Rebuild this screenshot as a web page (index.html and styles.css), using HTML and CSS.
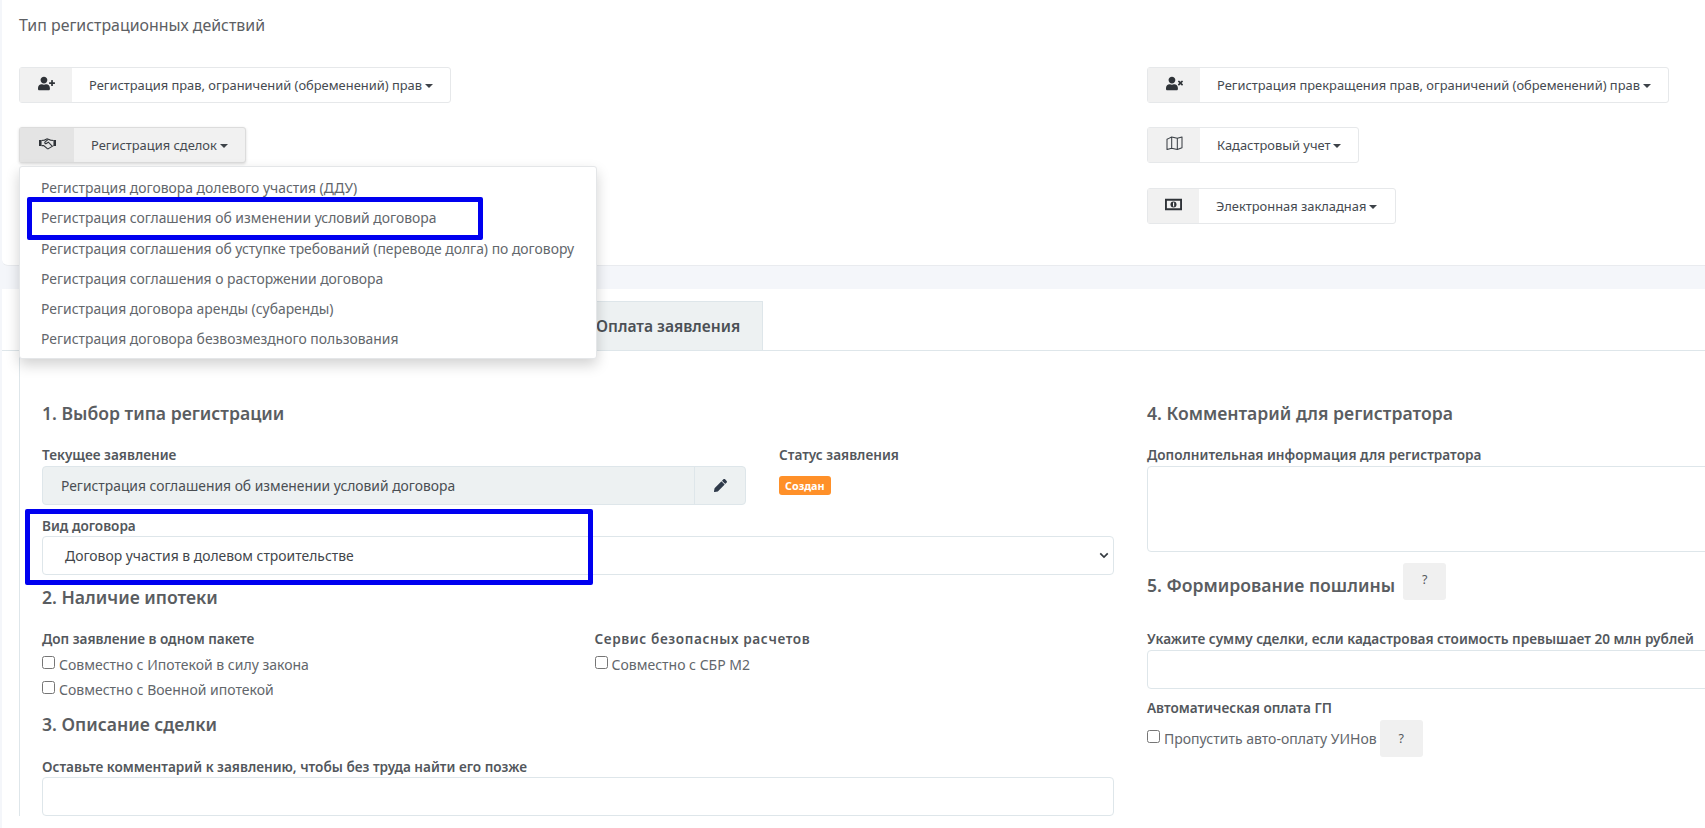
FILE: index.html
```html
<!DOCTYPE html>
<html lang="ru">
<head>
  <meta charset="UTF-8">
  <title>Тип регистрационных действий</title>
  <link rel="stylesheet" href="styles.css">
</head>
<body>
  <!-- Типы действий -->
  <section class="card actions-card">
    <h4 class="card-title">Тип регистрационных действий</h4>
    <div class="actions-grid">
      <div class="actions-col">
        <div class="btn-group">
          <span class="btn-icon">
            <svg class="icon" viewBox="0 0 640 512"><path d="M624 208h-64v-64c0-8.800-7.200-16-16-16h-32c-8.800 0-16 7.200-16 16v64h-64c-8.800 0-16 7.200-16 16v32c0 8.800 7.200 16 16 16h64v64c0 8.800 7.200 16 16 16h32c8.800 0 16-7.200 16-16v-64h64c8.800 0 16-7.200 16-16v-32c0-8.800-7.200-16-16-16zm-400 48c70.700 0 128-57.300 128-128S294.700 0 224 0 96 57.300 96 128s57.300 128 128 128zm89.600 32h-16.700c-22.200 10.200-46.900 16-72.900 16s-50.600-5.800-72.900-16h-16.700C60.200 288 0 348.200 0 422.400V464c0 26.500 21.500 48 48 48h352c26.500 0 48-21.500 48-48v-41.600c0-74.200-60.200-134.400-134.400-134.400z"/></svg>
          </span>
          <span class="btn-text">Регистрация прав, ограничений (обременений) прав<i class="caret"></i></span>
        </div>
        <div class="dropdown-wrap">
          <div class="btn-group is-open">
            <span class="btn-icon">
              <svg class="icon icon-line" viewBox="0 0 20 14" stroke="#2f3338" stroke-width="1.300">
                <path d="M0 3h3v7H0zM17 3h3v7h-3z" fill="#2f3338" stroke="none"/>
                <path d="M3 3.500l3.500-.5L9.500 1.500 13.500 3 17 3.500M3 9.500l2.500 0 4 3.300c.7.500 1.500.400 2.100-.100L17 9.500"/>
                <path d="M10.500 2.500L7 5.300c-.8 1 .4 2.200 1.600 1.600L11 5.500l4.200 4.200"/>
              </svg>
            </span>
            <span class="btn-text">Регистрация сделок<i class="caret"></i></span>
          </div>
          <ul class="dropdown-menu">
            <li>Регистрация договора долевого участия (ДДУ)</li>
            <li>Регистрация соглашения об изменении условий договора</li>
            <li>Регистрация соглашения об уступке требований (переводе долга) по договору</li>
            <li>Регистрация соглашения о расторжении договора</li>
            <li>Регистрация договора аренды (субаренды)</li>
            <li>Регистрация договора безвозмездного пользования</li>
          </ul>
          <div class="mark mark-option"></div>
        </div>
      </div>
      <div class="actions-col">
        <div class="btn-group">
          <span class="btn-icon">
            <svg class="icon" viewBox="0 0 640 512"><path d="M589.600 240l45.600-45.600c6.300-6.300 6.300-16.500 0-22.800l-22.800-22.800c-6.300-6.300-16.500-6.300-22.800 0L544 194.400l-45.600-45.600c-6.300-6.300-16.500-6.300-22.800 0l-22.800 22.800c-6.300 6.300-6.300 16.500 0 22.800l45.600 45.600-45.600 45.600c-6.300 6.300-6.300 16.500 0 22.800l22.800 22.800c6.300 6.300 16.500 6.300 22.800 0l45.600-45.600 45.600 45.600c6.300 6.300 16.500 6.300 22.800 0l22.800-22.800c6.300-6.300 6.300-16.500 0-22.800L589.600 240zM224 256c70.700 0 128-57.300 128-128S294.700 0 224 0 96 57.300 96 128s57.300 128 128 128zm89.600 32h-16.700c-22.200 10.200-46.900 16-72.900 16s-50.600-5.800-72.900-16h-16.700C60.200 288 0 348.200 0 422.400V464c0 26.500 21.500 48 48 48h352c26.500 0 48-21.500 48-48v-41.600c0-74.200-60.200-134.400-134.400-134.400z"/></svg>
          </span>
          <span class="btn-text">Регистрация прекращения прав, ограничений (обременений) прав<i class="caret"></i></span>
        </div>
        <div class="btn-group">
          <span class="btn-icon">
            <svg class="icon icon-line" viewBox="0 0 18 16" stroke="#3a3f45" stroke-width="1.100"><path d="M1 3.500l2-1 3-1.500 6 1.500 5-1.500v11.500l-5 2-6-1.500-5 1.500zM6 1v12.500M12 2.500V15" stroke-linejoin="round"/></svg>
          </span>
          <span class="btn-text">Кадастровый учет<i class="caret"></i></span>
        </div>
        <div class="btn-group">
          <span class="btn-icon btn-icon-narrow">
            <svg class="icon" viewBox="0 0 18 14"><path fill-rule="evenodd" d="M0 1h18v12H0zM2 3v8h14V3z"/><circle cx="9" cy="7" r="3.200"/><path fill="#fff" d="M8.500 5h1.200v4H8.500z"/></svg>
          </span>
          <span class="btn-text btn-text-narrow">Электронная закладная<i class="caret"></i></span>
        </div>
      </div>
    </div>
  </section>

  <!-- Форма заявления -->
  <section class="card form-card">
    <div class="tabs">
      <span class="tab">Оплата заявления</span>
    </div>
    <div class="form-body">
      <div class="form-col">
        <h4 class="section-title">1. Выбор типа регистрации</h4>
        <div class="current-row">
          <div>
            <label class="field-label">Текущее заявление</label>
            <div class="input-group">
              <span class="input-value">Регистрация соглашения об изменении условий договора</span>
              <span class="input-btn">
                <svg class="pencil" viewBox="0 0 512 512"><path d="M497.900 142.100l-46.100 46.100c-4.700 4.700-12.300 4.700-17 0l-111-111c-4.700-4.700-4.700-12.300 0-17l46.100-46.100c18.700-18.700 49.100-18.700 67.900 0l60.100 60.100c18.800 18.700 18.800 49.100 0 67.900zM284.200 99.800L21.600 362.400.4 483.900c-2.900 16.400 11.400 30.600 27.800 27.800l121.500-21.300 262.600-262.600c4.700-4.700 4.700-12.300 0-17l-111-111c-4.800-4.700-12.400-4.700-17.100 0z"/></svg>
              </span>
            </div>
          </div>
          <div>
            <label class="field-label">Статус заявления</label>
            <span class="badge">Создан</span>
          </div>
        </div>
        <div class="contract-field">
          <label class="field-label">Вид договора</label>
          <div class="select-box">
            <span>Договор участия в долевом строительстве</span>
            <svg class="chevron" viewBox="0 0 12 8"><path d="M1.500 1.500L6 6l4.500-4.500" fill="none" stroke="#343a40" stroke-width="2"/></svg>
          </div>
          <div class="mark mark-contract"></div>
        </div>

        <h4 class="section-title title-mortgage">2. Наличие ипотеки</h4>
        <div class="two-cols">
          <div>
            <label class="field-label">Доп заявление в одном пакете</label>
            <label class="check-row"><span class="check"></span>Совместно с Ипотекой в силу закона</label>
            <label class="check-row"><span class="check"></span>Совместно с Военной ипотекой</label>
          </div>
          <div>
            <label class="field-label label-spaced">Сервис безопасных расчетов</label>
            <label class="check-row"><span class="check"></span>Совместно с СБР М2</label>
          </div>
        </div>

        <h4 class="section-title title-deal">3. Описание сделки</h4>
        <label class="field-label">Оставьте комментарий к заявлению, чтобы без труда найти его позже</label>
        <div class="input-box"></div>
      </div>

      <div class="form-col">
        <h4 class="section-title">4. Комментарий для регистратора</h4>
        <label class="field-label">Дополнительная информация для регистратора</label>
        <div class="textarea-box"></div>

        <div class="fee-title">
          <h4 class="section-title">5. Формирование пошлины</h4>
          <span class="help-btn">?</span>
        </div>
        <label class="field-label">Укажите сумму сделки, если кадастровая стоимость превышает 20 млн рублей</label>
        <div class="input-box"></div>
        <label class="field-label label-auto">Автоматическая оплата ГП</label>
        <div class="skip-row">
          <label class="check-row"><span class="check"></span>Пропустить авто-оплату УИНов</label>
          <span class="help-btn">?</span>
        </div>
      </div>
    </div>
  </section>
</body>
</html>
```

FILE: styles.css
```css
html, body {
  height: 100%;
}
body {
  margin: 0;
  overflow: hidden;
  background: #f4f6fa;
  color: #5d6064;
  font-family: "Noto Sans", "Liberation Sans", sans-serif;
  font-size: 13.600px;
}
h4, ul {
  margin: 0;
  padding: 0;
}
.card {
  background: #fff;
  margin-left: 2px;
  width: 1800px;
}
/* Верхний блок */
.actions-card {
  height: 266px;
  box-sizing: border-box;
  padding: 14px 0 0 17px;
  border-radius: 0 0 6px 6px;
  border-bottom: 1px solid #e9ebef;
}
.card-title {
  font-size: 15.900px;
  font-weight: 400;
  line-height: 22px;
  color: #5d6064;
}
.actions-grid {
  display: grid;
  grid-template-columns: 1128px auto;
  margin-top: 31px;
}
.actions-col {
  display: flex;
  flex-direction: column;
  align-items: flex-start;
}
.actions-col .btn-group + .btn-group {
  margin-top: 24px;
}
.actions-col .btn-group:last-child {
  margin-top: 25px;
}
.dropdown-wrap {
  position: relative;
  margin-top: 24px;
}
.btn-group {
  display: flex;
  height: 36px;
  box-sizing: border-box;
  border: 1px solid #e6e8ea;
  border-radius: 3px;
  background: #fff;
  color: #454a50;
  font-size: 12.900px;
  line-height: 34px;
}
.btn-icon {
  width: 52px;
  display: flex;
  align-items: center;
  justify-content: center;
  background: #f1f1f1;
  padding-bottom: 4px;
  box-sizing: border-box;
}
.btn-icon-narrow {
  width: 51px;
}
.btn-text {
  padding: 0 17px 0 17px;
  white-space: nowrap;
}
.btn-text-narrow {
  padding-left: 17px;
  padding-right: 18px;
}
.icon {
  width: 17px;
  height: 15px;
  fill: #2f3338;
}
.icon-line {
  fill: none;
}
.caret {
  display: inline-block;
  margin-left: 3px;
  vertical-align: 2px;
  border-top: 4px solid #3d4248;
  border-left: 4px solid transparent;
  border-right: 4px solid transparent;
}
.is-open {
  background: #f1f1f1;
  border-color: #dcdcdc;
  box-shadow: 0 1px 3px rgba(0, 0, 0, 0.15);
}
.is-open .btn-icon {
  width: 54px;
  background: #e4e4e4;
}
.dropdown-menu {
  position: absolute;
  top: 39px;
  left: 0;
  z-index: 5;
  width: 578px;
  height: 193px;
  box-sizing: border-box;
  padding: 6px 0 0;
  list-style: none;
  background: #fff;
  border: 1px solid #e4e6e8;
  border-radius: 3px;
  box-shadow: 0 6px 14px rgba(0, 0, 0, 0.18);
}
.dropdown-menu li {
  padding-left: 21px;
  font-size: 13.900px;
  line-height: 30.300px;
  color: #62666b;
  white-space: nowrap;
}
/* Синие рамки-пометки поверх скриншота */
.mark {
  position: absolute;
  z-index: 6;
  box-sizing: border-box;
  border: 5px solid #0000f0;
  border-radius: 2px;
}
.mark-option {
  top: 70px;
  left: 8px;
  width: 456px;
  height: 43px;
}
.mark-contract {
  top: -7px;
  left: -17px;
  width: 568px;
  height: 76px;
}
/* Форма */
.form-card {
  margin-top: 23px;
  height: 600px;
  margin-left: 2px;
}
.tabs {
  display: flex;
  height: 62px;
  box-sizing: border-box;
  padding: 12px 0 0 569px;
  border-bottom: 1px solid #dee6ea;
}
.tab {
  padding: 0 22px 0 24px;
  background: #edf1f2;
  border: 1px solid #dee6ea;
  border-bottom: none;
  color: #4b5055;
  font-size: 15.600px;
  font-weight: 600;
  line-height: 49px;
}
.form-body {
  display: grid;
  grid-template-columns: 1072px 700px;
  column-gap: 33px;
  margin-left: 17px;
  padding: 50px 0 0 22px;
  border-left: 1px solid #dee6ea;
}
.section-title {
  font-size: 17.600px;
  font-weight: 600;
  line-height: 24px;
  color: #5a5d61;
}
.field-label {
  display: block;
  font-weight: 600;
  font-size: 13.600px;
  line-height: 20px;
  color: #53575c;
}
.label-spaced {
  letter-spacing: 0.6px;
}
.section-title + .field-label,
.section-title + .current-row {
  margin-top: 20px;
}
.current-row {
  display: grid;
  grid-template-columns: 704px auto;
  column-gap: 33px;
}
.input-group {
  display: flex;
  height: 39px;
  margin-top: 1px;
  box-sizing: border-box;
  background: #edf1f2;
  border: 1px solid #dee6ea;
  border-radius: 4px;
}
.input-value {
  flex: 1;
  padding-left: 18px;
  font-size: 13.850px;
  line-height: 37px;
  color: #4a4e53;
}
.input-btn {
  width: 50px;
  display: flex;
  align-items: center;
  justify-content: center;
  border-left: 1px solid #dee6ea;
}
.pencil {
  width: 13px;
  height: 13px;
  fill: #2f3a4a;
}
.badge {
  display: inline-block;
  margin-top: 11px;
  padding: 0 6px;
  height: 19px;
  background: #ff9029;
  color: #fff;
  border-radius: 3px;
  font-size: 10.800px;
  font-weight: 700;
  line-height: 19px;
}
.contract-field {
  position: relative;
  margin-top: 11px;
}
.select-box {
  display: flex;
  align-items: center;
  justify-content: space-between;
  height: 39px;
  margin-top: 0;
  padding: 0 4px 0 22px;
  box-sizing: border-box;
  border: 1px solid #dee6ea;
  border-radius: 4px;
  font-size: 13.900px;
  color: #42464b;
}
.chevron {
  width: 10px;
  height: 7px;
}
.title-mortgage {
  margin-top: 10px;
}
.two-cols {
  display: grid;
  grid-template-columns: 1fr 1fr;
  column-gap: 33px;
  margin-top: 20px;
}
.check-row {
  display: flex;
  align-items: flex-start;
  font-size: 14px;
  line-height: 25px;
  color: #62666b;
}
.two-cols .field-label + .check-row {
  margin-top: 3px;
}
.check {
  width: 13px;
  height: 13px;
  margin: 4px 4px 0 0;
  box-sizing: border-box;
  border: 1px solid #767676;
  border-radius: 2.500px;
  background: #fff;
}
.title-deal {
  margin-top: 10px;
}
.title-deal + .field-label {
  margin-top: 21px;
}
.input-box {
  height: 39px;
  margin-top: 0;
  box-sizing: border-box;
  border: 1px solid #dee6ea;
  border-radius: 4px;
}
.textarea-box {
  height: 86px;
  margin-top: 1px;
  box-sizing: border-box;
  border: 1px solid #dee6ea;
  border-radius: 4px;
}
.fee-title {
  display: flex;
  align-items: center;
  margin-top: 11px;
}
.fee-title .section-title {
  margin-top: 6px;
}
.fee-title + .field-label {
  margin-top: 29px;
}
.fee-title + .field-label + .input-box {
  margin-top: 1px;
}
.help-btn {
  width: 43px;
  height: 37px;
  margin-left: 8px;
  padding-bottom: 4px;
  box-sizing: border-box;
  display: flex;
  align-items: center;
  justify-content: center;
  background: #f0f0f0;
  border-radius: 3px;
  font-size: 12.500px;
  color: #55595e;
}
.label-auto {
  margin-top: 9px;
}
.skip-row {
  display: flex;
  align-items: center;
  margin-top: 2px;
}
.skip-row .help-btn {
  margin-left: 3px;
  padding: 0;
}
```
